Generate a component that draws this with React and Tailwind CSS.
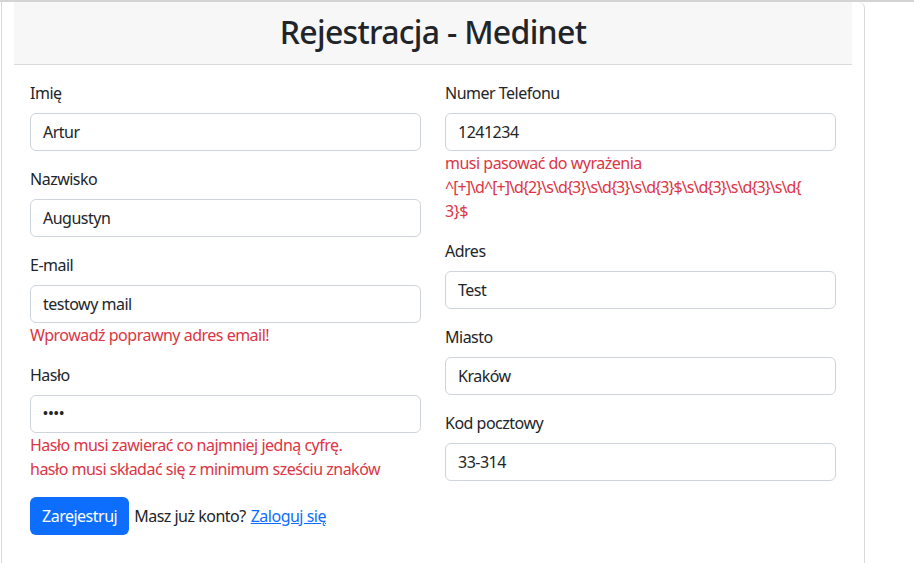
const leftFields = [
  { label: 'Imię', value: 'Artur' },
  { label: 'Nazwisko', value: 'Augustyn' },
  { label: 'E-mail', value: 'testowy mail', errors: ['Wprowadź poprawny adres email!'] },
  {
    label: 'Hasło',
    value: '••••',
    password: true,
    errors: ['Hasło musi zawierać co najmniej jedną cyfrę.', 'hasło musi składać się z minimum sześciu znaków'],
  },
]

const rightFields = [
  {
    label: 'Numer Telefonu',
    value: '1241234',
    errors: [
      'musi pasować do wyrażenia',
      '^[+]\\d^[+]\\d{2}\\s\\d{3}\\s\\d{3}\\s\\d{3}$\\s\\d{3}\\s\\d{3}\\s\\d{',
      '3}$',
    ],
  },
  { label: 'Adres', value: 'Test' },
  { label: 'Miasto', value: 'Kraków' },
  { label: 'Kod pocztowy', value: '33-314' },
]

function Field({ label, value, errors, password }) {
  return (
    <div className="mb-4">
      <label className="block mb-2 leading-6">{label}</label>
      <div className="h-[38px] px-3 flex items-center border border-[#ced4da] rounded-md bg-white text-[#212529]">
        {password ? <span className="text-[13px] font-bold tracking-[0.5px]">{value}</span> : value}
      </div>
      {errors &&
        errors.map((e) => (
          <div
            key={e}
            className={`leading-6 text-[#dc3545] whitespace-nowrap ${e.startsWith('^') ? 'tracking-[-0.95px]' : ''}`}
          >
            {e}
          </div>
        ))}
    </div>
  )
}

export default function App() {
  return (
    <div className="min-h-[563px] bg-white text-[#212529] text-base tracking-[-0.5px] font-['Segoe_UI','Noto_Sans',sans-serif]">
      <div className="h-[2px] bg-[#d4d4d4]" />
      <div className="ml-[1px] w-[864px] min-h-[561px] border-x border-[#d9d9d9] rounded-tr-md">
        {/* Header */}
        <div className="mx-3 h-[63px] bg-[#f7f7f7] border-b border-[#dadada] flex items-center justify-center">
          <h1 className="text-[32px] font-medium leading-none tracking-[-0.7px] text-[#212529] -mt-[3px]">Rejestracja - Medinet</h1>
        </div>

        {/* Body */}
        <div className="px-4 pt-4">
          <div className="grid grid-cols-2 gap-x-6 px-3">
            <div>
              {leftFields.map((f) => (
                <Field key={f.label} {...f} />
              ))}
              <div className="flex items-center">
                <button className="h-[38px] px-3 bg-[#0d6efd] text-white rounded-md">Zarejestruj</button>
                <span className="ml-[5px]">Masz już konto?</span>
                <a href="#" className="ml-[5px] text-[#0d6efd] underline">
                  Zaloguj się
                </a>
              </div>
            </div>
            <div>
              {rightFields.map((f) => (
                <Field key={f.label} {...f} />
              ))}
            </div>
          </div>
        </div>
      </div>
    </div>
  )
}
